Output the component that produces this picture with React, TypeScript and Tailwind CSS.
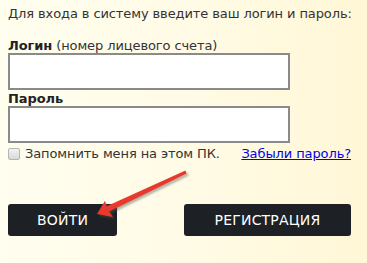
import React from 'react';

export default function App() {
  return (
    <div
      className="relative w-[367px] h-[263px] overflow-hidden bg-gradient-to-r from-[#fffeef] via-[#fffbe6] to-[#fff7d6] text-[13px] text-[#333] tracking-[-0.1px]"
      style={{ fontFamily: '"DejaVu Sans", Verdana, sans-serif' }}
    >
      <div className="flex flex-col px-2 pt-[6px]">
        <p className="leading-4">Для входа в систему введите ваш логин и пароль:</p>

        <label className="mt-4 leading-[15px]">
          <span className="font-bold text-[#222]">Логин</span> (номер лицевого счета)
        </label>
        <input type="text" className="w-[282px] h-[37px] border-2 border-[#8a8a8a] bg-white outline-none" />

        <label className="mt-px leading-[15px] font-bold text-[#222]">Пароль</label>
        <input type="password" className="w-[282px] h-[37px] border-2 border-[#8a8a8a] bg-white outline-none" />

        <div className="mt-[3px] flex items-center h-4">
          <span className="w-3 h-3 rounded-[2px] border border-[#b5b5b5] bg-gradient-to-b from-[#f2f2f2] to-[#d9d9d9]" />
          <span className="ml-[5px] leading-4">Запомнить меня на этом ПК.</span>
          <a href="#" className="ml-auto mr-2 leading-4 text-[#0000ee] underline">Забыли пароль?</a>
        </div>

        <div className="mt-[42px] flex items-center">
          <button className="w-[109px] h-8 rounded-[3px] bg-[#1d2024] text-white text-[14px] tracking-[0.2px]">
            ВОЙТИ
          </button>
          <button className="ml-[67px] w-[167px] h-8 rounded-[3px] bg-[#1d2024] text-white text-[14px] tracking-[0.2px]">
            РЕГИСТРАЦИЯ
          </button>
        </div>
      </div>

      <svg className="absolute left-0 top-0 pointer-events-none" width="367" height="263" viewBox="0 0 367 263">
        <defs>
          <filter id="sh" x="-20%" y="-20%" width="140%" height="140%">
            <feGaussianBlur stdDeviation="0.8" />
          </filter>
        </defs>
        <polygon
          points="185.4,170.6 106.6,206.2 105,200.7 97,214 112.8,217.1 109.2,211.6 186.6,173.4"
          fill="#555"
          opacity="0.45"
          transform="translate(2 2)"
          filter="url(#sh)"
        />
        <polygon
          points="185.4,170.6 106.6,206.2 105,200.7 97,214 112.8,217.1 109.2,211.6 186.6,173.4"
          fill="#e8392c"
        />
      </svg>
    </div>
  );
}
